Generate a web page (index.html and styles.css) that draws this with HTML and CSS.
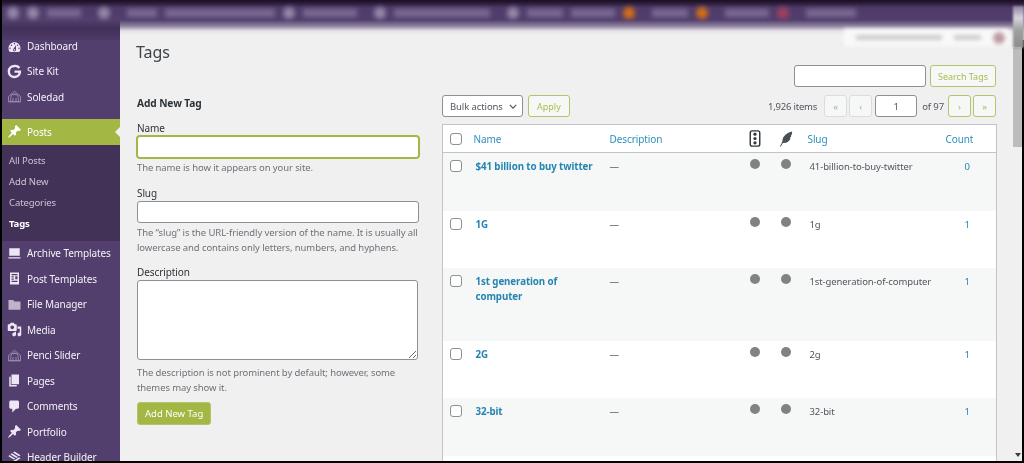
FILE: index.html
```html
<!DOCTYPE html>
<html lang="en">

<head>
    <meta charset="UTF-8">
    <title>Tags</title>
    <link rel="stylesheet" href="styles.css">
</head>

<body>
    <div class="frame">
        <div class="adminbar">
            <div class="bar-items">
                <i class="dot"></i><i class="dot"></i><b class="w34"></b><i class="dot gap"></i><b class="w30 gap"></b><b class="w110"></b>
                <i class="dot"></i><b class="w54"></b><i class="dot gap"></i><b class="w96"></b><i class="dot gap"></i><b class="w36"></b>
                <b class="w44"></b><i class="dot orange"></i><b class="w36 gap"></b><i class="dot orange"></i><b class="w44 gap"></b><i class="dot red"></i><b class="w50 gap"></b>
            </div>
            <div class="screen-tabs"><b class="w96"></b><b class="w30"></b><i class="dot pale"></i></div>
        </div>

        <div class="main">
            <ul class="menu">
                <li><svg viewBox="0 0 20 20"><path d="M3.76 16h12.48c1.1-1.37 1.76-3.11 1.76-5 0-4.42-3.58-8-8-8s-8 3.58-8 8c0 1.89.66 3.63 1.76 5zM10 4c.55 0 1 .45 1 1s-.45 1-1 1-1-.45-1-1 .45-1 1-1zM6 6c.55 0 1 .45 1 1s-.45 1-1 1-1-.45-1-1 .45-1 1-1zm8 0c.55 0 1 .45 1 1s-.45 1-1 1-1-.45-1-1 .45-1 1-1zm-5.37 5.55L12 7v6c0 1.1-.9 2-2 2s-2-.9-2-2c0-.57.24-1.08.63-1.45zM4 10c.55 0 1 .45 1 1s-.45 1-1 1-1-.45-1-1 .45-1 1-1zm12 0c.55 0 1 .45 1 1s-.45 1-1 1-1-.45-1-1 .45-1 1-1zm-5 3c0-.55-.45-1-1-1s-1 .45-1 1 .45 1 1 1 1-.45 1-1z"/></svg>Dashboard</li>
                <li><svg viewBox="0 0 20 20"><path class="g-logo" d="M16.5 5.2A7.6 7.6 0 0 0 10 2.6a7.4 7.4 0 1 0 7.2 8.4v-.8H10"/></svg>Site Kit</li>
                <li><svg class="dim" viewBox="0 0 20 20"><path class="dome" d="M2 17V10L10 3l8 7v7zM5 17v-5.5a5 5 0 0 1 10 0V17M8 17v-5M12 17v-5M2 17h16M7 7.5h6"/></svg>Soledad</li>
                <li class="current"><svg viewBox="0 0 20 20"><path d="M10.44 3.02l1.82-1.82 6.36 6.35-1.83 1.82c-1.05-.68-2.48-.57-3.41.36l-.75.75c-.92.93-1.04 2.35-.35 3.41l-1.83 1.82-2.41-2.41-2.8 2.79c-.42.42-3.38 2.71-3.8 2.29s1.86-3.39 2.28-3.81l2.79-2.79L4.1 9.36l1.83-1.82c1.05.69 2.48.57 3.4-.36l.75-.75c.93-.92 1.05-2.35.36-3.41z"/></svg>Posts</li>
                <li class="submenu">
                    <a>All Posts</a>
                    <a>Add New</a>
                    <a>Categories</a>
                    <a class="on">Tags</a>
                </li>
                <li><svg viewBox="0 0 20 20"><path d="M3 3h14v10H3zM7 15h6v1.5H7zM2 15h16v1.5H2z"/></svg>Archive Templates</li>
                <li><svg viewBox="0 0 20 20"><path fill-rule="evenodd" d="M4 2h12v16H4zM6 4v1.5h8V4zM6 7v1.5h3V7zm5 0v4h3V7zM6 10v1.5h3V10zm0 3v1.5h8V13z"/></svg>Post Templates</li>
                <li><svg class="soft" viewBox="0 0 20 20"><path d="M2 4h6l2 2h8v11H2z"/></svg>File Manager</li>
                <li><svg viewBox="0 0 20 20"><path d="M13 11V4c0-.55-.45-1-1-1h-1.67L9 1H5L3.67 3H2c-.55 0-1 .45-1 1v7c0 .55.45 1 1 1h10c.55 0 1-.45 1-1zM7 4.5c1.38 0 2.5 1.12 2.5 2.5S8.38 9.5 7 9.5 4.5 8.38 4.5 7 5.62 4.5 7 4.5zM14 6h5v10.5c0 1.38-1.12 2.5-2.5 2.5S14 17.88 14 16.5s1.12-2.5 2.5-2.5c.17 0 .34.02.5.05V9h-3V6zm-4 8.05V13h2v3.5c0 1.38-1.12 2.5-2.5 2.5S7 17.88 7 16.5 8.12 14 9.5 14c.17 0 .34.02.5.05z"/></svg>Media</li>
                <li><svg class="dim" viewBox="0 0 20 20"><path class="dome" d="M2 17V10L10 3l8 7v7zM5 17v-5.5a5 5 0 0 1 10 0V17M8 17v-5M12 17v-5M2 17h16M7 7.5h6"/></svg>Penci Slider</li>
                <li><svg viewBox="0 0 20 20"><path d="M6 15V2h10v13H6zm-1 1h8v2H3V5h2v11z"/></svg>Pages</li>
                <li><svg viewBox="0 0 20 20"><path d="M5 2h9c1.1 0 2 .9 2 2v7c0 1.1-.9 2-2 2h-2l-5 5v-5H5c-1.1 0-2-.9-2-2V4c0-1.1.9-2 2-2z"/></svg>Comments</li>
                <li><svg viewBox="0 0 20 20"><path d="M10.44 3.02l1.82-1.82 6.36 6.35-1.83 1.82c-1.05-.68-2.48-.57-3.41.36l-.75.75c-.92.93-1.04 2.35-.35 3.41l-1.83 1.82-2.41-2.41-2.8 2.79c-.42.42-3.38 2.71-3.8 2.29s1.86-3.39 2.28-3.81l2.79-2.79L4.1 9.36l1.83-1.82c1.05.69 2.48.57 3.4-.36l.75-.75c.93-.92 1.05-2.35.36-3.41z"/></svg>Portfolio</li>
                <li><svg viewBox="0 0 20 20"><path d="M10 2l8 5-2 1.3-8-5zM6.500 4.200l8 5-2 1.300-8-5zM3 6.500l8 5-2 1.300-7-4.500zM2 11l6 3.800 2-1.300 6-3.800 2 1.300-8 5-8-5z"/></svg>Header Builder</li>
            </ul>

            <div class="content">
                <h1>Tags</h1>
                <div class="search-row">
                    <input type="text" class="search-input">
                    <button class="btn">Search Tags</button>
                </div>

                <div class="columns">
                    <form class="col-left">
                        <h2>Add New Tag</h2>
                        <label>Name</label>
                        <input type="text" class="focused">
                        <p class="help-first">The name is how it appears on your site.</p>
                        <label>Slug</label>
                        <input type="text">
                        <p>The “slug” is the URL-friendly version of the name. It is usually all lowercase and contains only letters, numbers, and hyphens.</p>
                        <label>Description</label>
                        <textarea></textarea>
                        <p class="help-last">The description is not prominent by default; however, some themes may show it.</p>
                        <button type="button" class="btn primary">Add New Tag</button>
                    </form>

                    <div class="col-right">
                        <div class="tablenav">
                            <div class="select">Bulk actions<svg viewBox="0 0 10 6"><path d="M1 1l4 4 4-4"/></svg></div>
                            <button class="btn">Apply</button>
                            <span class="items">1,926 items</span>
                            <span class="page off">«</span>
                            <span class="page off">‹</span>
                            <span class="page-num">1</span>
                            <span class="of">of 97</span>
                            <span class="page">›</span>
                            <span class="page">»</span>
                        </div>

                        <table class="tags">
                            <colgroup>
                                <col class="c-check"><col class="c-name"><col class="c-desc"><col class="c-seo"><col class="c-feather"><col class="c-slug"><col>
                            </colgroup>
                            <thead>
                                <tr>
                                    <th><span class="check"></span></th>
                                    <th>Name</th>
                                    <th>Description</th>
                                    <th class="center"><svg class="th-icon" viewBox="0 0 14 20"><rect x="2" y="2" width="10" height="16" rx="2"/><circle cx="7" cy="5.500" r="1.700"/><circle cx="7" cy="10" r="1.700"/><circle cx="7" cy="14.500" r="1.700"/></svg></th>
                                    <th class="center"><svg class="th-feather" viewBox="0 0 16 18"><path d="M1 17.500C2.500 15 3.500 13 4 11 4 6 9 2 15 .5 15 3 14.500 4.500 13.500 5.500L14 6.500 12.500 7.500 13 9C11.500 12 8 14 4.500 13.500L1.800 17.800z"/></svg></th>
                                    <th class="slug">Slug</th>
                                    <th>Count</th>
                                </tr>
                            </thead>
                            <tbody>
                                <tr>
                                    <td><span class="check"></span></td>
                                    <td class="name">$41 billion to buy twitter</td>
                                    <td>—</td>
                                    <td class="center"><i class="state"></i></td>
                                    <td class="center"><i class="state"></i></td>
                                    <td class="slug">41-billion-to-buy-twitter</td>
                                    <td class="count">0</td>
                                </tr>
                                <tr>
                                    <td><span class="check"></span></td>
                                    <td class="name">1G</td>
                                    <td>—</td>
                                    <td class="center"><i class="state"></i></td>
                                    <td class="center"><i class="state"></i></td>
                                    <td class="slug">1g</td>
                                    <td class="count">1</td>
                                </tr>
                                <tr>
                                    <td><span class="check"></span></td>
                                    <td class="name">1st generation of computer</td>
                                    <td>—</td>
                                    <td class="center"><i class="state"></i></td>
                                    <td class="center"><i class="state"></i></td>
                                    <td class="slug">1st-generation-of-computer</td>
                                    <td class="count">1</td>
                                </tr>
                                <tr>
                                    <td><span class="check"></span></td>
                                    <td class="name">2G</td>
                                    <td>—</td>
                                    <td class="center"><i class="state"></i></td>
                                    <td class="center"><i class="state"></i></td>
                                    <td class="slug">2g</td>
                                    <td class="count">1</td>
                                </tr>
                                <tr>
                                    <td><span class="check"></span></td>
                                    <td class="name">32-bit</td>
                                    <td>—</td>
                                    <td class="center"><i class="state"></i></td>
                                    <td class="center"><i class="state"></i></td>
                                    <td class="slug">32-bit</td>
                                    <td class="count">1</td>
                                </tr>
                                <tr>
                                    <td class="row-next" colspan="7"></td>
                                </tr>
                            </tbody>
                        </table>
                    </div>
                </div>
            </div>

            <div class="scrollbar"><div class="thumb"></div></div>
        </div>
    </div>
</body>

</html>
```

FILE: styles.css
```css
* {
    box-sizing: border-box;
}

html,
body {
    margin: 0;
    height: 463px;
    overflow: hidden;
    background-color: #000;
}

body {
    font-family: "Noto Sans", Arial, sans-serif;
    font-size: 10px;
    letter-spacing: -0.1px;
    color: #3c434a;
}

.frame {
    height: 461px;
    margin-left: 2px;
    display: flex;
    flex-direction: column;
    overflow: hidden;
    background-color: #f0f0f1;
    filter: blur(0.35px);
}

/* top bar, blurred in the original capture */
.adminbar {
    flex: 0 0 40px;
    position: relative;
    z-index: 1;
    background: linear-gradient(to bottom, #1a0f22 0, #2a1c38 3px, #4f3b6a 8px, #523f6d 20px, #8f839f 26px, #e4e2e7 31px, #f0f0f1 35px);
}

.adminbar::before {
    content: "";
    position: absolute;
    left: 0;
    top: 0;
    width: 118px;
    height: 40px;
    background: linear-gradient(to bottom, #1a0f22 0, #2a1c38 3px, #4f3b6a 8px, #523f6d 20px, #41305a 28px, #4d3a66 40px);
}

.adminbar::after {
    content: "";
    position: absolute;
    right: 0;
    top: 6px;
    width: 11px;
    height: 42px;
    background: linear-gradient(to bottom, #8f839f 0, #d8d6dc 12px, #a0a0a0 24px, #8c8c8c 42px);
    filter: blur(1px);
}

.bar-items {
    position: relative;
    height: 26px;
    display: flex;
    align-items: center;
    gap: 8px;
    padding-left: 5px;
    filter: blur(2.5px);
}

.bar-items b,
.screen-tabs b {
    display: block;
    height: 8px;
    background-color: #7a6a92;
}

.dot {
    display: block;
    flex: none;
    width: 12px;
    height: 12px;
    border-radius: 50%;
    background-color: #9488a8;
}

.dot.orange {
    background-color: #d46f15;
}

.dot.red {
    background-color: #a04060;
}

.dot.pale {
    background-color: #bd9aa2;
}

.gap {
    margin-left: 9px;
}

.w30 { width: 30px; }
.w34 { width: 34px; }
.w36 { width: 36px; }
.w44 { width: 44px; }
.w50 { width: 50px; }
.w54 { width: 54px; }
.w96 { width: 96px; }
.w110 { width: 110px; }

.screen-tabs {
    position: absolute;
    top: 29px;
    right: 15px;
    width: 165px;
    height: 17px;
    display: flex;
    align-items: center;
    gap: 12px;
    padding-left: 12px;
    background-color: #f9f9f9;
    filter: blur(2px);
}

.screen-tabs b {
    height: 5px;
    background-color: #ccc;
}

.screen-tabs .dot {
    margin-left: auto;
    margin-right: 4px;
}

.main {
    flex: 1;
    min-height: 0;
    display: flex;
    position: relative;
    border-right: 2px solid #000;
}

/* sidebar */
.menu {
    flex: 0 0 118px;
    margin: 0;
    padding: 0;
    list-style: none;
    background-color: #523f6d;
    color: #f3f1f6;
}

.menu > li {
    height: 25.5px;
    display: flex;
    align-items: center;
    gap: 5px;
    padding-left: 5px;
    white-space: nowrap;
}

.menu > li:first-child {
    height: 18.500px;
    align-items: flex-start;
    line-height: 13px;
}

.menu svg {
    flex: none;
    width: 15px;
    height: 15px;
    fill: #ece6f6;
}

.menu svg.soft {
    fill: #bdb3cb;
}

.menu svg .g-logo {
    fill: none;
    stroke: #ece6f6;
    stroke-width: 3.2;
}

.menu svg.dim .dome {
    fill: none;
    stroke: #9c8fb0;
    stroke-width: 1.200;
}

.menu > li.current {
    position: relative;
    margin-top: 9.500px;
    background-color: #a3b745;
    color: #fff;
}

.menu > li.current svg {
    fill: #fff;
}

.menu > li.current::after {
    content: "";
    position: absolute;
    right: 0;
    top: 8px;
    border: 5px solid transparent;
    border-right-color: #f0f0f1;
    border-left-width: 0;
}

.menu > li.submenu {
    height: 96px;
    display: flex;
    flex-direction: column;
    align-items: flex-start;
    gap: 0;
    padding: 5px 0 0 7px;
    background-color: #433258;
    color: #cbc5d3;
    font-size: 9.500px;
}

.submenu a {
    height: 21px;
    line-height: 21px;
}

.submenu a.on {
    color: #fff;
    font-weight: 700;
}

/* content */
.content {
    flex: 1;
    min-width: 0;
    padding-left: 17px;
}

h1 {
    margin: 0 0 0 -1px;
    height: 25px;
    line-height: 24px;
    font-size: 16px;
    font-weight: 400;
    color: #3c434a;
}

.search-row {
    display: flex;
    justify-content: flex-end;
    gap: 4px;
    padding-right: 26px;
}

input,
textarea {
    display: block;
    width: 282px;
    height: 22px;
    padding: 0 6px;
    border: 1px solid #8c8f94;
    border-radius: 3px;
    background-color: #fff;
    outline: none;
}

input.focused {
    border-color: #a3b745;
    box-shadow: 0 0 0 1px #a3b745;
}

input.search-input {
    width: 132px;
}

textarea {
    height: 80px;
    width: 281px;
    margin-bottom: 3px;
}

.btn {
    height: 22px;
    padding: 0 7px;
    font: inherit;
    font-size: 9px;
    color: #a9bc52;
    background-color: #f6f7f7;
    border: 1px solid #b5c46c;
    border-radius: 3px;
    white-space: nowrap;
}

.btn.primary {
    height: 23px;
    font-size: 9.500px;
    color: #fff;
    background-color: #a3b745;
}

.columns {
    display: flex;
    gap: 23px;
    margin-top: 8px;
}

.col-left {
    flex: 0 0 282px;
}

h2 {
    margin: 0 0 11px;
    height: 16px;
    line-height: 16px;
    font-size: 10.2px;
    font-weight: 700;
    color: #2c3338;
}

label {
    display: block;
    height: 13px;
    margin-bottom: 1px;
    line-height: 13px;
    color: #2c3338;
}

p {
    margin: 0 0 11px;
    padding-top: 2px;
    font-size: 9.500px;
    line-height: 15px;
    color: #6d7278;
}

p.help-first {
    margin-bottom: 12px;
}

p.help-last {
    margin-bottom: 7px;
}

.col-right {
    flex: 0 0 555px;
}

.tablenav {
    display: flex;
    align-items: center;
    height: 22px;
    margin-bottom: 7px;
    padding-right: 1px;
    font-size: 9.500px;
    color: #50575e;
}

.select {
    width: 81px;
    height: 22px;
    display: flex;
    align-items: center;
    justify-content: space-between;
    padding: 0 5px 0 7px;
    margin-right: 5px;
    background-color: #fff;
    border: 1px solid #8c8f94;
    border-radius: 3px;
}

.select svg {
    width: 8px;
    height: 5px;
    fill: none;
    stroke: #50575e;
    stroke-width: 1.500;
}

.tablenav .btn {
    padding: 0 8px;
}

.items {
    margin-left: auto;
    margin-right: 5px;
    letter-spacing: -0.2px;
}

.page {
    width: 23px;
    height: 22px;
    margin-left: 2px;
    display: flex;
    align-items: center;
    justify-content: center;
    color: #a9bc52;
    background-color: #f6f7f7;
    border: 1px solid #b5c46c;
    border-radius: 3px;
}

.page.off {
    color: #a7aaad;
    border-color: #dcdcde;
}

.page-num {
    width: 42px;
    height: 22px;
    margin-left: 3px;
    display: flex;
    align-items: center;
    justify-content: center;
    background-color: #fff;
    border: 1px solid #8c8f94;
    border-radius: 3px;
}

.of {
    margin: 0 2px 0 5px;
}

/* tags table */
.tags {
    width: 555px;
    table-layout: fixed;
    border-collapse: collapse;
    background-color: #fff;
    border: 1px solid #c3c4c7;
    font-size: 9.500px;
}

.c-check { width: 30px; }
.c-name { width: 136px; }
.c-desc { width: 130px; }
.c-seo { width: 32px; }
.c-feather { width: 30px; }
.c-slug { width: 144px; }

th {
    height: 28px;
    padding: 0 0 0 1px;
    text-align: left;
    font-weight: 400;
    color: #2e8fbd;
    border-bottom: 1px solid #c3c4c7;
    font-size: 10px;
}

td {
    padding: 6px 0 0 1px;
    vertical-align: top;
    line-height: 15px;
    color: #50575e;
}

tbody tr:nth-child(odd) {
    background-color: #f6f7f7;
}

th:first-child,
td:first-child {
    padding-left: 7px;
}

td:first-child {
    padding-top: 7px;
}

th.slug {
    padding-left: 7px;
}

td.slug {
    padding-left: 9px;
}

.check {
    display: block;
    width: 12px;
    height: 12px;
    background-color: #fff;
    border: 1px solid #8c8f94;
    border-radius: 3px;
}

.name {
    padding: 6px 12px 36.500px 3px;
    font-size: 9.750px;
    font-weight: 700;
    color: #2585b2;
}

.center {
    text-align: center;
    padding-left: 0;
}

.th-icon,
.th-feather {
    display: block;
    margin: 0 auto;
}

.th-icon {
    width: 14px;
    height: 19px;
}

.th-icon rect {
    fill: none;
    stroke: #32373c;
    stroke-width: 1.500;
}

.th-icon circle {
    fill: #32373c;
}

.th-feather {
    width: 14px;
    height: 16px;
    fill: #4a4f54;
}

.state {
    display: block;
    width: 10px;
    height: 10px;
    margin-left: auto;
    margin-right: auto;
    border-radius: 50%;
    background-color: #828282;
}

.count {
    padding-left: 20px;
    color: #2585b2;
}

.row-next {
    height: 30px;
}

/* page scrollbar */
.scrollbar {
    position: absolute;
    top: 8px;
    right: 0;
    bottom: 0;
    width: 9px;
}

.scrollbar::after {
    content: "";
    position: absolute;
    right: 1px;
    bottom: 4px;
    border: 3.500px solid transparent;
    border-top: 4px solid #3c3c3c;
    border-bottom-width: 0;
}

.thumb {
    height: 99px;
    background-color: #bcbcbc;
}
```
